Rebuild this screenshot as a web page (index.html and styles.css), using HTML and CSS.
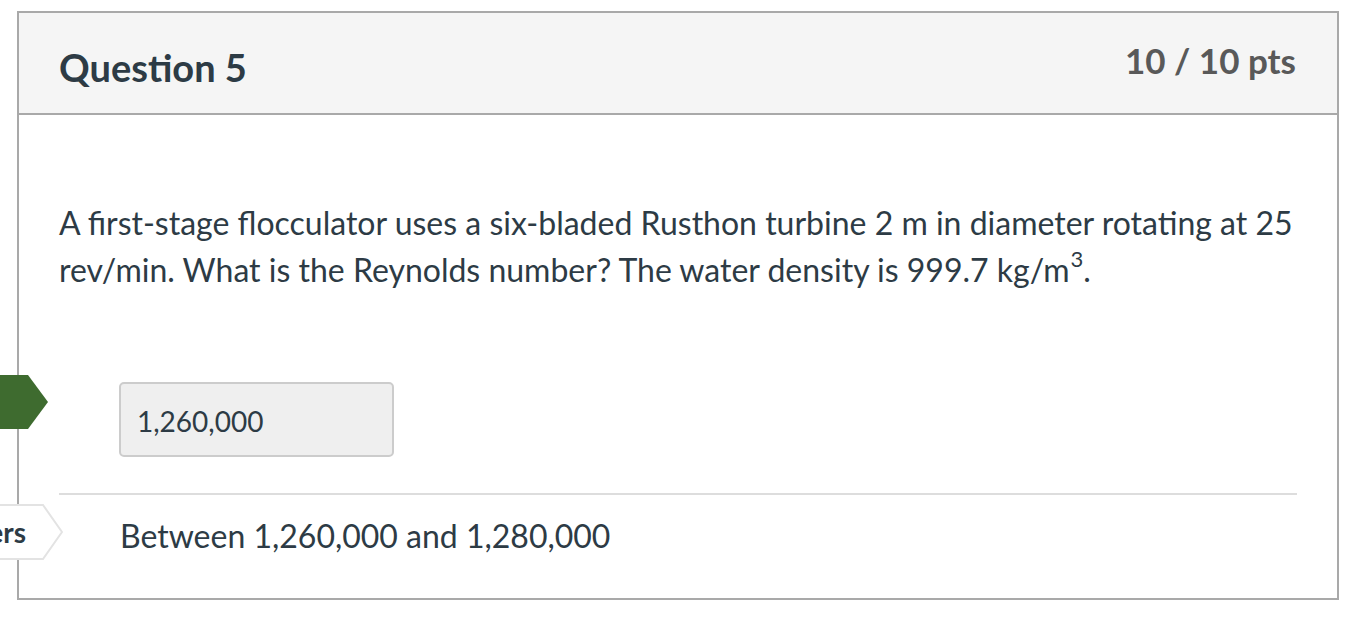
FILE: index.html
```html
<!DOCTYPE html>
<html>
<head>
<meta charset="utf-8">
<link rel="stylesheet" href="styles.css">
</head>
<body>
<div class="card">
  <div class="header">
    <h2 class="title">Question 5</h2>
    <div class="pts">10 / 10 pts</div>
  </div>
  <div class="body">
    <p class="qtext">A first-stage flocculator uses a six-bladed Rusthon turbine 2 m in diameter rotating at 25 rev/min. What is the Reynolds number? The water density is 999.7 kg/m<sup>3</sup>.</p>
    <div class="answer">
      <div class="arrow arrow-correct"><span class="arrow-text">Correct!</span></div>
      <div class="answer-box">1,260,000</div>
    </div>
    <div class="sep"></div>
    <div class="answer answer-range">
      <div class="arrow arrow-plain">
        <svg class="arrow-shape" width="200" height="56" viewBox="0 0 200 56"><polygon points="-2,1 180,1 199,28 180,55 -2,55" fill="#ffffff" stroke="#e3e3e3" stroke-width="2"/></svg>
        <span class="arrow-text">Correct Answers</span>
      </div>
      <div class="range-text">Between 1,260,000 and 1,280,000</div>
    </div>
  </div>
</div>
</body>
</html>
```
FILE: styles.css
```css
html, body {
  margin: 0;
  padding: 0;
  background: #ffffff;
  overflow: hidden;
}
body {
  padding: 11px 17px 0 17px;
  font-family: Lato, "Open Sans", sans-serif;
  color: #2d3b45;
}
.card {
  position: relative;
  border: 2px solid #a9a9a9;
  width: 1318px;
  box-sizing: content-box;
}
.header {
  height: 100px;
  background: #f5f5f5;
  border-bottom: 2px solid #a9a9a9;
  display: flex;
  justify-content: space-between;
  align-items: flex-start;
  padding: 0 41px 0 40px;
}
.title {
  margin: 32px 0 0 0;
  font-size: 38px;
  font-weight: 700;
  line-height: 1.2;
  color: #2d3b45;
}
.pts {
  margin-top: 26px;
  font-size: 35px;
  font-weight: 700;
  line-height: 1.2;
  color: #595959;
}
.body {
  padding: 84px 40px 39px 40px;
}
.qtext {
  margin: 0;
  font-size: 32px;
  line-height: 47px;
}
.qtext sup {
  font-size: 22px;
  line-height: 0;
  vertical-align: 0;
  position: relative;
  top: -15px;
  margin-left: 1px;
}
.answer {
  position: relative;
}
.answer:first-of-type {
  margin-top: 89px;
}
.answer-box {
  margin-left: 60px;
  width: 275px;
  height: 75px;
  box-sizing: border-box;
  background: #efefef;
  border: 2px solid #cccccc;
  border-radius: 5px;
  font-size: 28px;
  display: flex;
  align-items: center;
  padding-left: 16px;
  padding-top: 2px;
}
.arrow {
  position: absolute;
  width: 200px;
  height: 54px;
}
.arrow-correct {
  left: -211px;
  top: -7px;
  background: #3e6b2f;
  clip-path: polygon(0 0, 180px 0, 200px 27px, 180px 54px, 0 54px);
}
.arrow-correct .arrow-text {
  color: #ffffff;
  font-weight: 700;
  font-size: 28px;
  line-height: 54px;
  position: absolute;
  right: 300px;
}
.sep {
  margin-top: 36px;
  border-top: 2px solid #dddddd;
}
.answer-range {
  padding-top: 17px;
}
.arrow-plain {
  left: -196px;
  top: 9px;
  height: 56px;
}
.arrow-shape {
  position: absolute;
  left: 0;
  top: 0;
}
.arrow-plain .arrow-text {
  position: absolute;
  right: 37px;
  top: 0;
  line-height: 56px;
  font-size: 28px;
  font-weight: 700;
  white-space: nowrap;
  color: #2d3b45;
}
.range-text {
  margin-left: 61px;
  font-size: 32px;
  line-height: 47px;
}
```
